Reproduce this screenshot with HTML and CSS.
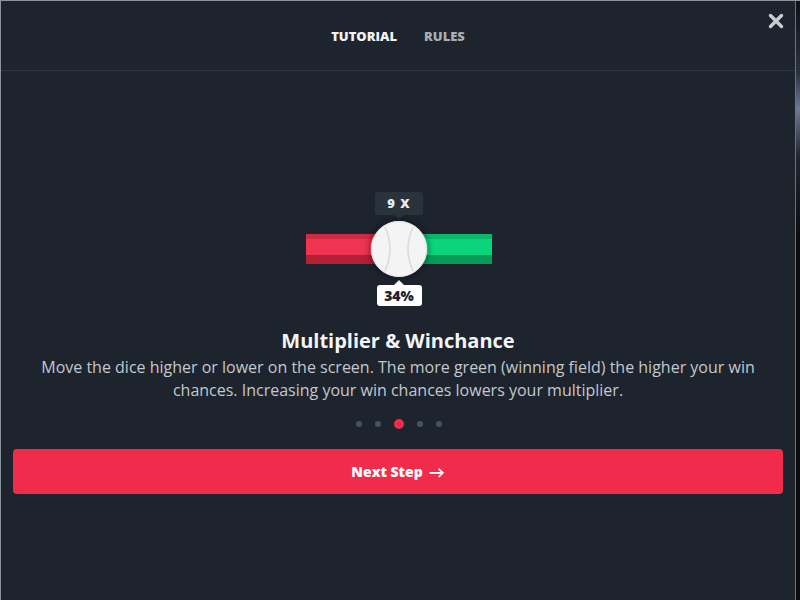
FILE: index.html
```html
<!DOCTYPE html>
<html lang="en">
<head>
<meta charset="utf-8">
<title>Tutorial</title>
<link rel="stylesheet" href="styles.css">
</head>
<body>
<div class="backdrop">
  <div class="modal">
    <header class="modal-head">
      <nav class="tabs">
        <span class="tab active">TUTORIAL</span>
        <span class="tab">RULES</span>
      </nav>
      <button class="close" aria-label="Close">
        <svg width="16" height="16" viewBox="0 0 16 16"><path d="M2.5 2.5 L13.5 13.5 M13.5 2.5 L2.5 13.5" stroke="#c9cdd3" stroke-width="3.4" stroke-linecap="round"/></svg>
      </button>
    </header>

    <section class="step">
      <div class="slider-demo">
        <div class="tip tip-top">9 X</div>
        <div class="track">
          <div class="bar bar-red"></div>
          <div class="thumb">
            <svg width="58" height="58" viewBox="0 0 58 58">
              <circle cx="29" cy="29" r="28" fill="#f4f4f5"/>
              <path d="M15 7 Q25 29 15 51" fill="none" stroke="#d9dadd" stroke-width="1.6"/>
              <path d="M43 7 Q33 29 43 51" fill="none" stroke="#d9dadd" stroke-width="1.6"/>
              <circle cx="29" cy="29" r="27.5" fill="none" stroke="#e2e3e6" stroke-width="1"/>
            </svg>
          </div>
          <div class="bar bar-green"></div>
        </div>
        <div class="tip tip-bottom">34%</div>
      </div>

      <h2 class="step-title">Multiplier &amp; Winchance</h2>
      <p class="step-text">Move the dice higher or lower on the screen. The more green (winning field) the higher your win chances. Increasing your win chances lowers your multiplier.</p>

      <div class="dots">
        <span class="dot"></span>
        <span class="dot"></span>
        <span class="dot current"></span>
        <span class="dot"></span>
        <span class="dot"></span>
      </div>
    </section>

    <div class="actions">
      <button class="next">Next Step <span class="arrow">&#8594;</span></button>
    </div>
  </div>
  <div class="edge"></div>
</div>
</body>
</html>
```
FILE: styles.css
```css
* { box-sizing: border-box; }

html, body {
  margin: 0;
  height: 100%;
}

body {
  background: #3d434b;
  font-family: "Open Sans", "Lato", sans-serif;
  overflow: hidden;
}

.backdrop {
  display: flex;
  height: 600px;
  padding: 1px 0 0 1px;
  background: #8d939b;
}

.modal {
  width: 794px;
  height: 599px;
  background: #1d242d;
  display: flex;
  flex-direction: column;
  flex-shrink: 0;
}

.edge {
  flex: 1;
  border-left: 1px solid #6c727a;
  background: linear-gradient(180deg, #0d1016 0%, #2a3140 12%, #6d7894 18%, #20252e 26%, #0a0c10 40%, #0a0c10 100%);
}

.modal-head {
  flex-shrink: 0;
  height: 70px;
  border-bottom: 1px solid #2f3640;
  display: flex;
  align-items: center;
  justify-content: center;
  position: relative;
}

.tabs {
  display: flex;
  gap: 27px;
  margin-left: 0;
  margin-top: 1px;
}

.tab {
  font-weight: 800;
  font-size: 13px;
  color: #a8aeb6;
}

.tab.active { color: #f2f3f5; }

.close {
  position: absolute;
  right: 11px;
  top: 12px;
  background: none;
  border: 0;
  padding: 0;
  width: 16px;
  height: 16px;
  display: flex;
}

.step {
  flex-shrink: 0;
  display: flex;
  flex-direction: column;
  align-items: center;
  padding-top: 121px;
}

.slider-demo {
  display: flex;
  flex-direction: column;
  align-items: center;
  margin-left: 2px;
}

.tip {
  position: relative;
  font-weight: 800;
  font-size: 13px;
  border-radius: 3px;
  text-align: center;
}

.tip-top {
  width: 48px;
  height: 23px;
  line-height: 23px;
  background: #2a323c;
  color: #e9ebee;
  letter-spacing: 1px;
}

.tip-top::after {
  content: "";
  position: absolute;
  left: 50%;
  bottom: -5px;
  margin-left: -5px;
  border-left: 5px solid transparent;
  border-right: 5px solid transparent;
  border-top: 5px solid #2a323c;
}

.tip-bottom {
  width: 45px;
  height: 21px;
  line-height: 21px;
  background: #ffffff;
  color: #1d242d;
  margin-top: 7px;
  font-size: 14px;
}

.tip-bottom::before {
  content: "";
  position: absolute;
  left: 50%;
  top: -5px;
  margin-left: -5px;
  border-left: 5px solid transparent;
  border-right: 5px solid transparent;
  border-bottom: 5px solid #ffffff;
}

.track {
  display: flex;
  align-items: center;
  margin-top: 5px;
  height: 58px;
}

.bar {
  width: 78px;
  height: 30px;
}

.bar-red {
  background: linear-gradient(180deg, #d22a42 0, #d22a42 5px, #ee3450 5px, #ee3450 21px, #b51f36 21px);
  margin-right: -14px;
}

.bar-green {
  background: linear-gradient(180deg, #07b969 0, #07b969 5px, #0bd47d 5px, #0bd47d 21px, #079a58 21px);
  margin-left: -14px;
}

.thumb {
  position: relative;
  z-index: 1;
  width: 58px;
  height: 58px;
  border-radius: 50%;
  box-shadow: 0 0 6px rgba(0, 0, 0, 0.5);
  display: flex;
}

.step-title {
  margin: 23px 0 0;
  font-weight: 700;
  font-size: 20px;
  line-height: 23px;
  color: #f4f5f7;
}

.step-text {
  margin: 4px 0 0;
  width: 740px;
  text-align: center;
  font-size: 16px;
  line-height: 23px;
  color: #c3c8ce;
}

.dots {
  display: flex;
  align-items: center;
  gap: 13px;
  margin-top: 17px;
  margin-left: 2px;
}

.dot {
  width: 6px;
  height: 6px;
  border-radius: 50%;
  background: #4a525c;
}

.dot.current {
  width: 10px;
  height: 10px;
  background: #f02b4c;
}

.actions {
  padding: 20px 12px 0;
}

.next {
  width: 100%;
  height: 45px;
  border: 0;
  border-radius: 4px;
  background: #f02b4c;
  color: #ffffff;
  font-family: "Open Sans", "Lato", sans-serif;
  font-weight: 800;
  font-size: 14px;
  display: flex;
  align-items: center;
  justify-content: center;
  gap: 6px;
}

.arrow {
  font-size: 16px;
  font-weight: 700;
}
```
